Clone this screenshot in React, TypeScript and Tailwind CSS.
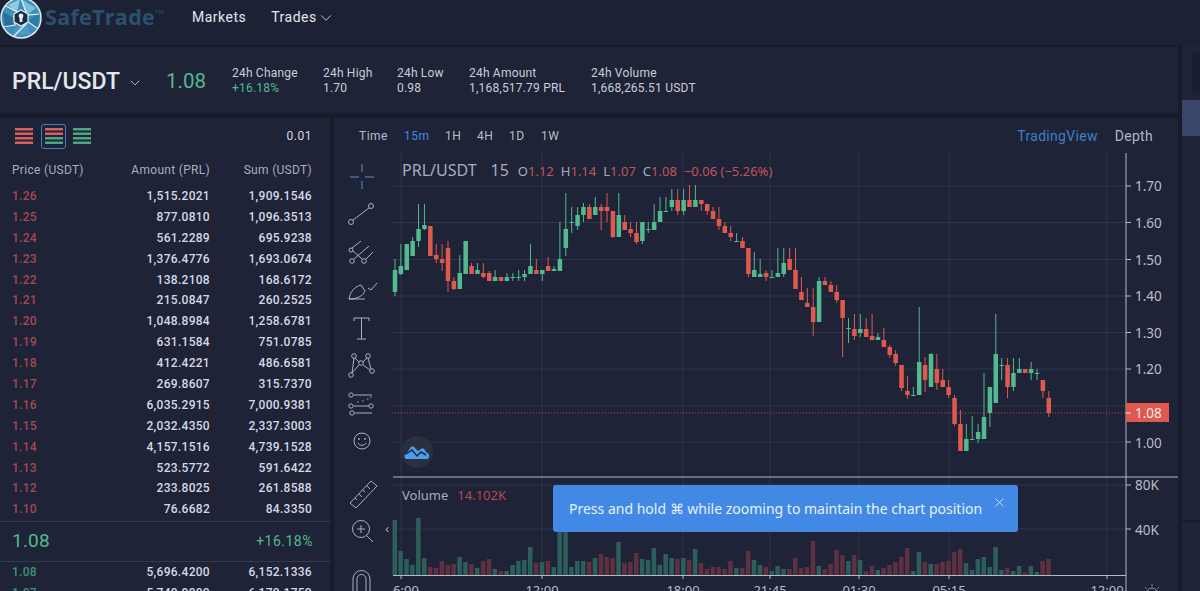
import React from 'react';
import { ChevronDown, X } from 'lucide-react';

type Candle = [number, number, number, number, 'g' | 'r'];

// body top, body bottom, wick top, wick bottom (pixels in chart space)
const CANDLES: Candle[] = [
  [270, 292, 259, 296, 'g'], [266, 274, 244, 275, 'g'], [244, 270, 244, 270, 'g'], [241, 256, 237, 256, 'g'],
  [229, 241, 204, 247, 'g'], [225, 229, 204, 230, 'g'], [226, 256, 226, 256, 'r'], [255, 259, 244, 263, 'r'],
  [259, 263, 244, 271, 'r'], [248, 281, 241, 292, 'r'], [281, 289, 277, 290, 'r'], [273, 289, 255, 289, 'g'],
  [241, 274, 241, 274, 'g'], [266, 274, 263, 274, 'r'], [270, 274, 263, 274, 'g'], [273, 277, 263, 278, 'r'],
  [273, 281, 271, 281, 'r'], [277, 281, 270, 281, 'g'], [277, 281, 277, 281, 'r'], [277, 281, 273, 281, 'g'],
  [277, 278, 273, 281, 'g'], [277, 278, 270, 281, 'g'], [274, 277, 270, 281, 'g'], [266, 274, 244, 274, 'g'],
  [270, 274, 259, 274, 'r'], [270, 274, 270, 281, 'g'], [266, 271, 257, 271, 'r'], [269, 271, 266, 271, 'g'],
  [259, 271, 222, 271, 'g'], [229, 248, 193, 256, 'g'], [222, 223, 207, 233, 'g'], [215, 226, 207, 230, 'g'],
  [207, 215, 203, 222, 'g'], [207, 219, 204, 219, 'r'], [207, 215, 197, 215, 'g'], [207, 211, 204, 230, 'r'],
  [207, 211, 193, 222, 'r'], [211, 237, 211, 238, 'r'], [215, 237, 193, 237, 'g'], [222, 230, 215, 230, 'r'],
  [229, 233, 222, 237, 'r'], [233, 242, 222, 244, 'r'], [222, 241, 222, 244, 'g'], [229, 230, 222, 233, 'g'],
  [222, 230, 204, 230, 'g'], [211, 222, 197, 222, 'g'], [211, 212, 197, 212, 'g'], [200, 207, 189, 211, 'g'],
  [200, 211, 189, 215, 'r'], [200, 211, 189, 215, 'g'], [200, 207, 185, 207, 'r'], [200, 207, 185, 207, 'g'],
  [200, 204, 200, 211, 'r'], [204, 211, 204, 215, 'r'], [211, 219, 207, 219, 'r'], [219, 226, 207, 230, 'r'],
  [226, 233, 222, 233, 'r'], [233, 237, 226, 241, 'r'], [241, 242, 233, 242, 'g'], [241, 248, 237, 248, 'r'],
  [248, 274, 248, 277, 'r'], [270, 277, 252, 277, 'g'], [274, 277, 259, 277, 'g'], [273, 277, 270, 281, 'r'],
  [277, 278, 270, 278, 'g'], [273, 277, 248, 277, 'g'], [263, 274, 248, 277, 'g'], [259, 270, 248, 270, 'r'],
  [270, 289, 248, 289, 'r'], [292, 300, 277, 300, 'r'], [303, 307, 288, 307, 'r'], [307, 322, 288, 336, 'r'],
  [281, 322, 277, 322, 'g'], [281, 285, 277, 285, 'r'], [285, 292, 281, 292, 'r'], [292, 300, 285, 303, 'r'],
  [300, 318, 300, 357, 'r'], [328, 329, 318, 343, 'g'], [329, 336, 314, 340, 'r'], [329, 333, 314, 337, 'g'],
  [329, 337, 318, 337, 'r'], [336, 340, 314, 340, 'r'], [337, 340, 333, 340, 'g'], [340, 347, 328, 347, 'r'],
  [347, 355, 345, 358, 'r'], [354, 363, 350, 366, 'r'], [365, 388, 365, 391, 'r'], [391, 395, 376, 399, 'r'],
  [395, 396, 387, 396, 'g'], [362, 395, 307, 395, 'g'], [365, 380, 357, 392, 'r'], [354, 387, 353, 387, 'g'],
  [369, 383, 354, 390, 'r'], [380, 387, 369, 387, 'r'], [387, 395, 380, 398, 'r'], [398, 424, 395, 426, 'r'],
  [424, 451, 410, 451, 'r'], [439, 451, 424, 451, 'g'], [439, 440, 416, 440, 'g'], [432, 439, 424, 443, 'g'],
  [417, 439, 373, 439, 'g'], [387, 413, 387, 427, 'g'], [354, 403, 314, 403, 'g'], [365, 366, 358, 380, 'g'],
  [365, 387, 358, 398, 'r'], [373, 387, 358, 391, 'g'], [369, 373, 358, 373, 'g'], [369, 373, 369, 373, 'r'],
  [369, 373, 362, 380, 'g'], [373, 374, 369, 380, 'g'], [380, 391, 380, 398, 'r'], [398, 413, 391, 417, 'r'],
];

// height of each volume bar in pixels, same order as CANDLES
const VOLUMES = [
  55, 24, 16, 10, 57, 17, 8, 7, 14, 10, 11, 18, 13, 11, 7, 14, 16, 6, 4, 4, 10, 14, 15, 28, 12, 13, 14, 8, 45, 45, 8, 14,
  14, 13, 17, 21, 18, 17, 33, 12, 13, 22, 16, 15, 27, 10, 21, 17, 16, 17, 15, 26, 12, 6, 8, 8, 6, 14, 7, 7, 24, 15, 10, 8,
  4, 9, 6, 6, 17, 7, 8, 34, 9, 6, 11, 25, 20, 14, 20, 15, 4, 9, 5, 7, 10, 13, 18, 27, 4, 23, 13, 11, 11, 13, 14, 23, 26, 12,
  5, 16, 18, 8, 28, 5, 7, 4, 9, 3, 9, 3, 14, 16,
];

const ASKS = [
  ['1.26', '1,515.2021', '1,909.1546'], ['1.25', '877.0810', '1,096.3513'], ['1.24', '561.2289', '695.9238'],
  ['1.23', '1,376.4776', '1,693.0674'], ['1.22', '138.2108', '168.6172'], ['1.21', '215.0847', '260.2525'],
  ['1.20', '1,048.8984', '1,258.6781'], ['1.19', '631.1584', '751.0785'], ['1.18', '412.4221', '486.6581'],
  ['1.17', '269.8607', '315.7370'], ['1.16', '6,035.2915', '7,000.9381'], ['1.15', '2,032.4350', '2,337.3003'],
  ['1.14', '4,157.1516', '4,739.1528'], ['1.13', '523.5772', '591.6422'], ['1.12', '233.8025', '261.8588'],
  ['1.10', '76.6682', '84.3350'],
];

const GREEN = '#53b98f';
const RED = '#e0594f';
const ICON = '#a9b0c6';

const BookIcon = ({ top, bottom }: { top: string; bottom: string }) => (
  <svg width="18" height="16" viewBox="0 0 18 16">
    <rect x="0" y="0" width="18" height="2.500" fill={top} />
    <rect x="0" y="4.500" width="18" height="2.500" fill={top} />
    <rect x="0" y="9" width="18" height="2.500" fill={bottom} />
    <rect x="0" y="13.500" width="18" height="2.500" fill={bottom} />
  </svg>
);

const Logo = () => (
  <svg width="42" height="40" viewBox="0 0 42 40" className="shrink-0">
    <circle cx="21" cy="18" r="20" fill="#3f8fb8" stroke="#dbe9f2" strokeWidth="1.5" />
    <path d="M21 -1 L36 8 L27 15 Z" fill="#7cc0dc" />
    <path d="M39 14 L37 30 L27 21 Z" fill="#2f7ba6" />
    <path d="M30 34 L13 35 L17 25 L27 23 Z" fill="#4a9cc6" />
    <path d="M5 28 L3 12 L14 18 L15 25 Z" fill="#2a6f99" />
    <path d="M8 5 L20 -1 L17 13 Z" fill="#8ccbe4" />
    <g stroke="#e6f1f7" strokeWidth="1.2" fill="none">
      <path d="M21 -2 L27 15 L39 14" /><path d="M38 29 L27 21 L27 15" /><path d="M14 36 L27 23" />
      <path d="M3 27 L15 25 L14 16" /><path d="M6 6 L17 12 L27 15" />
    </g>
    <polygon points="21,10 28,14 28,22 21,26 14,22 14,14" fill="#1c2b45" stroke="#e6f1f7" strokeWidth="1.2" />
    <circle cx="21" cy="16" r="2.4" fill="#e6f1f7" />
    <rect x="19.6" y="17" width="2.8" height="5" fill="#e6f1f7" />
  </svg>
);

const Tools = () => (
  <svg width="58" height="441" viewBox="0 32 58 441" fill="none" stroke={ICON} strokeWidth="1" className="shrink-0">
    {/* coordinates are relative to x=334, y=118 */}
    <g stroke="#5f8fd0">
      <path d="M28 46v8M28 63v8M16 59h9M31 59h9" />
    </g>
    <g>
      <circle cx="17" cy="104" r="2.5" /><circle cx="37" cy="88" r="2.5" /><path d="M19 102 35 90" />
    </g>
    <g>
      <circle cx="18" cy="143" r="2.3" /><circle cx="30" cy="143" r="2.3" /><circle cx="17" cy="132" r="2" />
      <path d="M18 130 27 123M19 133 28 141M20 141 35 128M32 141 39 134" />
    </g>
    <path d="M15 181c1-8 7-13 12-14l4 6c-2 5-8 8-16 8zM34 170l3 2 6-7M15 181h16" />
    <path d="M20 200h15M27.5 200v21M23 221h9M20 200v3M35 200v3" />
    <g>
      <circle cx="20" cy="238" r="2.3" /><circle cx="34" cy="238" r="2.3" /><circle cx="27" cy="245" r="2.3" />
      <circle cx="17" cy="257" r="2.3" /><circle cx="38" cy="253" r="2.3" />
      <path d="M20 240 18 255M34 240 37 251M21 240 25 244M33 240 29 244M25 247 18 255M29 247 36 252" />
    </g>
    <g>
      <circle cx="17" cy="277" r="2.2" /><circle cx="17" cy="288" r="2.2" /><circle cx="37" cy="288" r="2.2" /><circle cx="18" cy="295" r="2.2" />
      <path d="M20 277h18M20 288h15M21 295h17" />
      <path d="M23 284h2M28 283h2M33 281h2M36 279h2" strokeDasharray="1.5 1" />
    </g>
    <g>
      <circle cx="28" cy="323" r="8" /><path d="M24 325c1 3 7 3 8 0" /><circle cx="25" cy="321" r=".6" /><circle cx="31" cy="321" r=".6" />
    </g>
    <path d="M16 385 37 363l6 5-21 22zM21 380l2 2M25 376l3 3M29 372l2 2M33 368l3 3" />
    <g>
      <circle cx="27" cy="411" r="8.5" /><path d="M27 407v8M23 411h8M33 418l6 6" />
    </g>
    <path d="M23 473v-12a4.500 4.500 0 0 1 9 0v12M19 473v-12a8.500 8.500 0 0 1 17 0v12" />
    <text x="53" y="415" fontSize="12" fill={ICON} stroke="none" textAnchor="middle" className="font-['Noto_Sans',sans-serif]">‹</text>
  </svg>
);

// the whole plot, x from 392 and y from 150 in page pixels
const Plot = () => {
  const priceLines = [186, 222.5, 259.5, 296, 332.5, 369, 406, 442];
  const timeLines = [401, 542, 683, 770, 859, 949, 1107];
  const priceLabels = ['1.70', '1.60', '1.50', '1.40', '1.30', '1.20'];
  return (
    <svg width="786" height="441" viewBox="392 150 786 441" className="block font-['Noto_Sans',sans-serif]">
      {priceLines.map((y) => <line key={y} x1="392" x2="1126" y1={y} y2={y} stroke="#2f3549" />)}
      <line x1="392" x2="1126" y1="529" y2="529" stroke="#2f3549" />
      <line x1="392" x2="1126" y1="485" y2="485" stroke="#2f3549" />
      {timeLines.map((x) => <line key={x} x1={x} x2={x} y1="152" y2="575" stroke="#2f3549" />)}

      {VOLUMES.map((h, i) => (
        <rect
          key={i}
          x={392.500 + i * 5.89}
          y={575 - h}
          width="4.500"
          height={h}
          fill={CANDLES[i][4] === 'g' ? '#2c5f5b' : '#5f303f'}
        />
      ))}

      {CANDLES.map(([top, bottom, wickTop, wickBottom, kind], i) => {
        const x = 395 + i * 5.89;
        const fill = kind === 'g' ? GREEN : RED;
        return (
          <g key={i}>
            <line x1={x} x2={x} y1={wickTop} y2={wickBottom} stroke={fill} />
            <rect x={x - 2.250} y={top} width="4.500" height={Math.max(bottom - top, 1)} fill={fill} />
          </g>
        );
      })}

      <line x1="392" x2="1126" y1="413" y2="413" stroke={RED} strokeDasharray="1 2" opacity="0.8" />
      <line x1="393" x2="1178" y1="477" y2="477" stroke="#b4b9cb" />
      <line x1="393" x2="1126" y1="575.500" y2="575.500" stroke="#b4b9cb" />
      <line x1="1126" x2="1126" y1="153" y2="591" stroke="#b4b9cb" />

      {[186, 222.5, 259.5, 296, 332.5, 369, 442, 485, 529].map((y) => (
        <line key={y} x1="1126" x2="1131" y1={y} y2={y} stroke="#b4b9cb" />
      ))}
      {timeLines.map((x) => <line key={x} x1={x} x2={x} y1="575" y2="579" stroke="#b4b9cb" />)}

      {priceLabels.map((t, i) => (
        <text key={t} x="1135" y={[191, 228, 265, 301, 338, 374][i]} fontSize="13.500" fill="#b8bdd0">{t}</text>
      ))}
      <rect x="1126" y="403" width="43" height="19" fill="#e0594f" />
      <line x1="1126" x2="1131" y1="413" y2="413" stroke="#f5e6e4" />
      <text x="1135" y="418" fontSize="13.500" fill="#f6ece9">1.08</text>
      <text x="1135" y="448" fontSize="13.500" fill="#b8bdd0">1.00</text>
      <text x="1135" y="490" fontSize="13.500" fill="#b8bdd0">80K</text>
      <text x="1135" y="535" fontSize="13.500" fill="#b8bdd0">40K</text>

      {[['6:00', 406], ['12:00', 542], ['18:00', 683], ['21:45', 770], ['01:30', 859], ['05:15', 949], ['12:00', 1107]].map(([t, x]) => (
        <text key={String(x)} x={x} y="595" fontSize="13" fill="#b8bdd0" textAnchor="middle">{t}</text>
      ))}

      <g fill="none" stroke="#8d93a8">
        <circle cx="1152" cy="594" r="6" />
        <path d="M1152 584v2M1145 587l1.500 1.500M1159 587l-1.500 1.500" />
      </g>

      <circle cx="417" cy="452" r="16" fill="#2b3041" />
      <path d="M406 459c-2-1-2-4 0-5l5-7c1-1 2-1 3 0l4 4 3-2c1-1 2-1 3 0l3 4c3 0 3 6 0 6z" fill="#4a9ef0" />
      <path d="M406 454l6-4 5 6 4-4 5 3" fill="none" stroke="#1f2438" strokeWidth="1.500" />
    </svg>
  );
};

const BookRow = ({ price, amount, sum, tall, color }: { price: string; amount: string; sum: string; tall: string; color: string }) => (
  <div className={`flex items-center pl-[12px] pr-[18px] text-[12px] font-medium tracking-[0.3px] text-[#d6d9e4] ${tall}`}>
    <span className={`w-[106px] ${color}`}>{price}</span>
    <span className="w-[92px] text-right">{amount}</span>
    <span className="w-[102px] text-right">{sum}</span>
  </div>
);

export default function App() {
  return (
    <div className="h-[591px] w-[1200px] overflow-hidden bg-[#171b2c] text-[#d6d9e4] font-['Roboto',sans-serif]">
      <header className="flex h-[45px] items-center bg-[#1d2135] pb-[6px]">
        <div className="flex w-[192px] items-center">
          <Logo />
          <span className="mb-[5px] ml-[3px] text-[21.500px] font-bold tracking-[0.3px] text-[#2a5169] font-['Open_Sans',sans-serif]">SafeTrade</span>
          <span className="mb-4 text-[6px] text-[#2a5169]">TM</span>
        </div>
        <nav className="mb-[4px] flex items-center gap-[25px] text-[14px] tracking-[0.5px] text-[#e4e7ee]">
          <span>Markets</span>
          <span className="flex items-center">Trades<ChevronDown size={18} strokeWidth={1.100} /></span>
        </nav>
      </header>

      <div className="flex h-[546px] gap-[4px] pt-[2px]">
        <div className="flex w-[1178px] flex-col gap-[5px]">
          <section className="flex h-[66px] items-center bg-[#1e2337] pl-[12px] pt-[2px]">
            <span className="mt-[2px] w-[109px] whitespace-nowrap text-[23px] font-medium text-[#e4e7ee]">PRL/USDT</span>
            <ChevronDown size={16} strokeWidth={1.300} className="ml-[6px] mt-[3px] text-[#c7cbd8]" />
            <span className="ml-[23px] mt-[1px] w-[66px] text-[20.500px] text-[#53b98f]">1.08</span>
            <div className="flex text-[12px] leading-[15.500px] tracking-[0.2px] text-[#c9cdd9]">
              <div className="w-[91px]"><div>24h Change</div><div className="text-[#53b98f]">+16.18%</div></div>
              <div className="w-[74px]"><div>24h High</div><div>1.70</div></div>
              <div className="w-[72px]"><div>24h Low</div><div>0.98</div></div>
              <div className="w-[122px]"><div>24h Amount</div><div>1,168,517.79 PRL</div></div>
              <div><div>24h Volume</div><div>1,668,265.51 USDT</div></div>
            </div>
          </section>

          <div className="flex min-h-0 flex-1 gap-[4px]">
            <aside className="w-[330px] bg-[#1e2337]">
              <div className="flex h-[36px] items-center pl-[15px] pr-[18px]">
                <BookIcon top="#d9605c" bottom="#d9605c" />
                <span className="ml-[8px] flex h-[25px] w-[25px] items-center justify-center rounded-[3px] border border-[#3f7fc4]">
                  <BookIcon top="#d9605c" bottom="#4ea583" />
                </span>
                <span className="ml-[7px]"><BookIcon top="#4ea583" bottom="#4ea583" /></span>
                <span className="ml-auto text-[12px] tracking-[0.5px] text-[#d6d9e4]">0.01</span>
              </div>
              <div className="mt-[5px] flex h-[22px] items-center justify-between pl-[12px] pr-[18px] text-[12px] tracking-[0.3px] text-[#a8adc0]">
                <span className="w-[106px]">Price (USDT)</span>
                <span className="w-[92px] whitespace-nowrap text-right">Amount (PRL)</span>
                <span className="w-[102px] text-right">Sum (USDT)</span>
              </div>
              <div className="mt-[4.500px]">
                {ASKS.map(([price, amount, sum]) => (
                  <BookRow key={price} price={price} amount={amount} sum={sum} tall="h-[20.900px]" color="text-[#a8474f]" />
                ))}
              </div>
              <div className="mt-[1px] flex h-[41px] items-center justify-between border-y border-[#33394e] pl-[12px] pr-[17px] text-[#53b98f]">
                <span className="text-[19px] tracking-[0.2px]">1.08</span>
                <span className="text-[14px] tracking-[0.5px]">+16.18%</span>
              </div>
              <BookRow price="1.08" amount="5,696.4200" sum="6,152.1336" tall="h-[21px]" color="text-[#3f9276]" />
              <BookRow price="1.07" amount="5,749.9900" sum="6,170.1750" tall="h-[21px]" color="text-[#3f9276]" />
            </aside>

            <main className="relative min-w-0 flex-1 bg-[#1e2337]">
              <div className="flex h-[32px] items-center pl-[25px] pr-[25px] pt-[4px] text-[12px] tracking-[0.5px] text-[#b9bdcd]">
                <span className="w-[45px]">Time</span>
                <span className="w-[41px] text-[#3c8be0]">15m</span>
                <span className="w-[32px]">1H</span>
                <span className="w-[32px]">4H</span>
                <span className="w-[32px]">1D</span>
                <span>1W</span>
                <span className="ml-auto text-[14px] tracking-[0.3px] text-[#3f7ec8]">TradingView</span>
                <span className="ml-[17px] text-[14px] tracking-[0.3px] text-[#b0b5c8]">Depth</span>
              </div>
              <div className="flex">
                <Tools />
                <Plot />
              </div>

              <div className="absolute left-[68px] top-[40px] flex items-baseline whitespace-nowrap text-[#a8adc0] font-['Noto_Sans',sans-serif]">
                <span className="text-[16px]">PRL/USDT</span>
                <span className="ml-[14px] text-[16px]">15</span>
                <span className="ml-[9px] text-[13px]">O<span className="text-[#c2555a]">1.12</span></span>
                <span className="ml-[7px] text-[13px]">H<span className="text-[#c2555a]">1.14</span></span>
                <span className="ml-[7px] text-[13px]">L<span className="text-[#c2555a]">1.07</span></span>
                <span className="ml-[7px] text-[13px]">C<span className="text-[#c2555a]">1.08</span></span>
                <span className="ml-[7px] text-[13px] text-[#c2555a]">−0.06 (−5.26%)</span>
              </div>

              <div className="absolute left-[68px] top-[368px] whitespace-nowrap text-[13px] text-[#a8adc0] font-['Noto_Sans',sans-serif]">
                Volume<span className="ml-[9px] text-[#b54a4f]">14.102K</span>
              </div>

              <div className="absolute left-[219px] top-[367px] flex h-[47px] w-[465px] items-center rounded-[3px] bg-[#4189e4] pl-[16px] text-[14px] text-[#e8f1fc] font-['Noto_Sans',sans-serif]">
                <span>Press and hold ⌘ while zooming to maintain the chart position</span>
                <X size={15} strokeWidth={1.200} className="absolute right-[11px] top-[10px]" />
              </div>
            </main>
          </div>
        </div>

        <div className="-mt-[2px] min-w-0 flex-1 bg-[#1e2337]">
          <div className="ml-[10px] mt-[7px] h-[43px] bg-[#1a1e30]" />
          <div className="mt-[5px] h-[36px] bg-[#39456b]" />
          <div className="mt-[384px] h-[2px] bg-[#171b2c]" />
        </div>
      </div>
    </div>
  );
}
